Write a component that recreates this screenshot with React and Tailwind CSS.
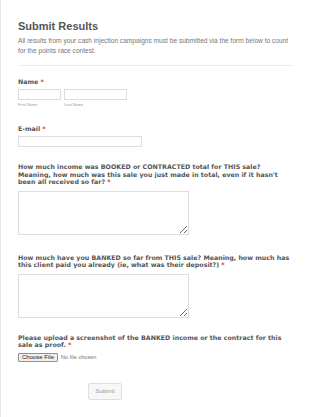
import React from 'react';

function Label({ children }) {
  return (
    <div className="font-['DejaVu_Sans',sans-serif] font-bold text-[6.3px] leading-[7.5px] text-[#555]">
      {children} <span className="text-[#e03131]">*</span>
    </div>
  );
}

export default function App() {
  return (
    <div className="w-[310px] h-[417px] bg-white border-l border-[#e6e6e6] overflow-hidden font-['Liberation_Sans',Arial,sans-serif]">
      <div className="pl-[17px] pr-[16px] pt-[19px]">
        <h1 className="text-[11px] font-bold text-[#555] leading-[14px]">Submit Results</h1>
        <p className="mt-[3px] text-[6.6px] leading-[10px] text-[#777]">
          All results from your cash injection campaigns must be submitted via the form below to count for the points race contest.
        </p>
        <div className="mt-[9px] border-t border-[#eee]" />

        <div className="mt-[12px]">
          <Label>Name</Label>
          <div className="mt-[3px] flex gap-[3px]">
            <div>
              <div className="w-[43px] h-[11px] border border-[#ddd]" />
              <div className="mt-[2px] text-[4px] leading-[5px] text-[#999]">First Name</div>
            </div>
            <div>
              <div className="w-[63px] h-[11px] border border-[#ddd]" />
              <div className="mt-[2px] text-[4px] leading-[5px] text-[#999]">Last Name</div>
            </div>
          </div>
        </div>

        <div className="mt-[18px]">
          <Label>E-mail</Label>
          <div className="mt-[4px] w-[124px] h-[11px] border border-[#ddd]" />
        </div>

        <div className="mt-[16px]">
          <Label>
            How much income was BOOKED or CONTRACTED total for THIS sale? Meaning, how much was this sale you just made in total, even if it hasn't been all received so far?
          </Label>
          <textarea className="block mt-[5px] w-[171px] h-[44px] border border-[#ddd]" />
        </div>

        <div className="mt-[19px]">
          <Label>
            How much have you BANKED so far from THIS sale? Meaning, how much has this client paid you already (ie, what was their deposit?)
          </Label>
          <textarea className="block mt-[5px] w-[171px] h-[44px] border border-[#ddd]" />
        </div>

        <div className="mt-[16px]">
          <Label>
            Please upload a screenshot of the BANKED income or the contract for this sale as proof.
          </Label>
          <div className="mt-[4px] flex items-center gap-[3px]">
            <span className="px-[3px] h-[9px] flex items-center border border-[#8f8f8f] rounded-[1px] bg-[#efefef] text-[6px] text-[#222]">
              Choose File
            </span>
            <span className="text-[5.6px] text-[#777]">No file chosen</span>
          </div>
        </div>

        <div className="mt-[21px] flex">
          <span className="ml-[70px] w-[34px] h-[17px] flex items-center justify-center border border-[#ddd] rounded-[2px] bg-[#f7f7f7] text-[6.2px] text-[#999]">
            Submit
          </span>
        </div>
      </div>
    </div>
  );
}
